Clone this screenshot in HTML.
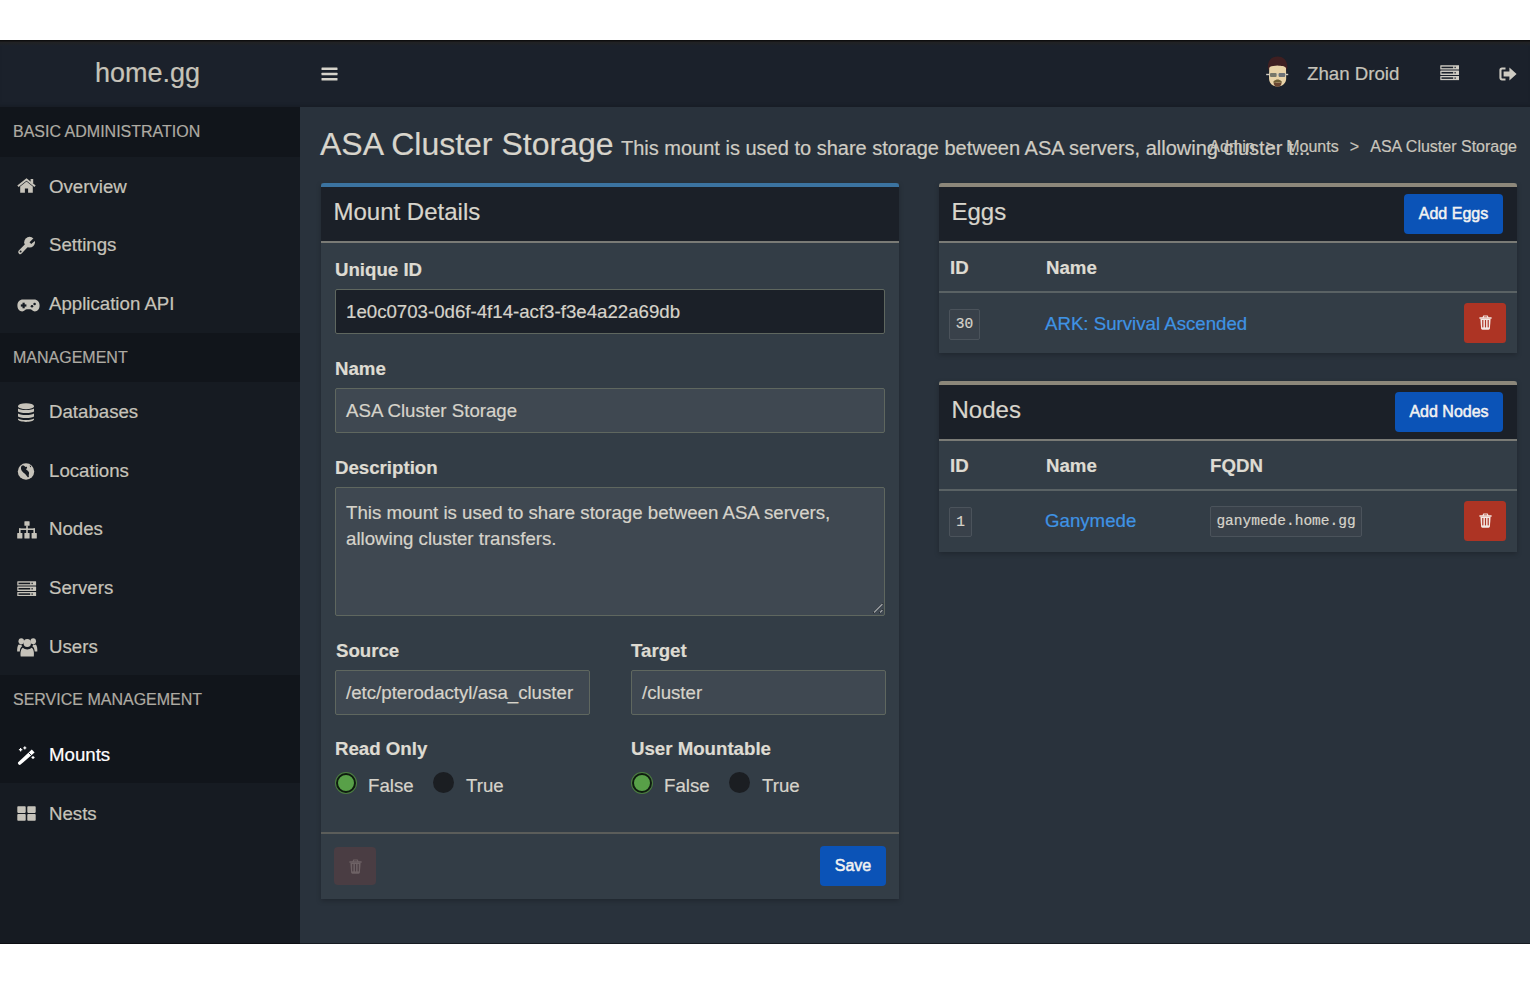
<!DOCTYPE html>
<html><head><meta charset="utf-8">
<style>
*{box-sizing:border-box;margin:0;padding:0}
html,body{width:1530px;height:988px;overflow:hidden;background:#fff;font-family:"Liberation Sans",sans-serif;color:#d6d3ca}
.abs{position:absolute}
#app{position:absolute;left:0;top:40px;width:1530px;height:904px;background:#29323c;overflow:hidden}
#hdr{position:absolute;left:0;top:0;width:1530px;height:67px;background:#1b212b;box-shadow:inset 0 -3px 3px -1px rgba(0,0,0,.12)}
#hdr .topline{position:absolute;left:0;top:0;width:1530px;height:6px;background:linear-gradient(#0e0e0f 0px,#0e0e0f 1px,#222224 2px,#1f2226 3.5px,#1b212b 6px)}
#botline{position:absolute;z-index:5;left:0;top:903px;width:1530px;height:1px;background:rgba(0,0,0,.45)}
#logo{position:absolute;left:95px;top:18px;font-size:27px;color:#c6c3b9;letter-spacing:0}
#side{position:absolute;left:0;top:67px;width:300px;height:837px;background:#161b22}
.sh{position:absolute;left:0;width:300px;height:49.5px;background:#11151b;font-size:16px;color:#aeaba3;padding-left:13px;line-height:49.5px}
.it{position:absolute;left:0;width:300px;height:58.67px;font-size:18.67px;color:#c6c3ba;line-height:58.67px}
.it .tx{position:absolute;left:49px;top:1px}
.it.act{background:#11151b;color:#fff}
#content{position:absolute;left:300px;top:67px;width:1230px;height:837px;background:#29323c}

#ptitle{position:absolute;left:20px;top:18.5px;font-size:32px;color:#d8d5cc;white-space:nowrap}
#ptitle small{font-size:20px;padding-left:7.5px;color:#cfccc3}
#bc{position:absolute;right:13px;top:31px;font-size:16px;color:#c9c6bd;white-space:nowrap}
#bc span.sep{padding:0 6.67px}
.box{position:absolute;background:#333d46;box-shadow:0 2px 5px rgba(0,0,0,.22)}
.box .bt{position:absolute;left:0;top:0;right:0;height:4px;border-radius:3px 3px 0 0}
.box .bh{position:absolute;left:0;top:4px;right:0;height:56px;background:#1b2028;border-bottom:2px solid #7a7b76}
.box .bh .t{position:absolute;left:12.5px;top:10.5px;font-size:24px;color:#d8d5cc}
.lbl{position:absolute;font-weight:bold;font-size:18.67px;color:#dedbd2}
.inp{position:absolute;height:45px;background:#3f4851;border:1.5px solid #5f675f;border-radius:2px;font-size:18.67px;color:#d6d3ca;padding-left:10px;line-height:43px;white-space:nowrap;overflow:hidden}
.btn{position:absolute;background:#0b53b7;border-radius:4px;color:#f2f2f2;font-size:16px;text-align:center;-webkit-text-stroke:0.5px #f2f2f2}
.del{position:absolute;background:#ad3424;border-radius:3.5px}
.th{position:absolute;font-weight:bold;font-size:18.67px;color:#dedbd2}
.sep2{position:absolute;left:0;right:0;height:2px;background:#5a6264}
.badge{position:absolute;border:1px solid #4b535b;background:#39414a;border-radius:2px;font-family:"Liberation Mono",monospace;font-size:14.5px;color:#d6d3ca;text-align:center}
.link{position:absolute;font-size:18.67px;color:#3f93e4;white-space:nowrap}
.radio{position:absolute;width:21px;height:21px;border-radius:50%}
.rg{background:#58a048;border:2.5px solid #0f1c10;box-shadow:0 0 0 1px #4b7d40;width:20px!important;height:20px!important;margin:0.5px}
.rd{background:#1b1e22}
.rt{position:absolute;font-size:18.67px;color:#d6d3ca}
#app div,#app span,#app small{-webkit-text-stroke:0.2px currentColor}
#app .btn{-webkit-text-stroke:0.5px #f2f2f2}
</style></head>
<body>
<div id="app">
  <div id="hdr">
    <div class="topline"></div>
    <div id="logo">home.gg</div><svg style="position:absolute;left:321px;top:26.5px;color:#d6d3ca" width="17" height="14" viewBox="0 0 17 14"><g fill="currentColor"><rect x="0.5" y="0.5" width="16" height="2.6" rx="0.5"/><rect x="0.5" y="5.7" width="16" height="2.6" rx="0.5"/><rect x="0.5" y="10.9" width="16" height="2.6" rx="0.5"/></g></svg><svg style="position:absolute;left:1264px;top:16px" width="27" height="33" viewBox="0 0 27 33">
<path d="M4 13 C3 4 8 0.4 13.6 0.4 C19.2 0.4 24 4 23.2 13 L22 14 L5 14 Z" fill="#3f1f21"/>
<path d="M5.2 12 C6.5 9.5 10 10 13.6 9.4 C17.2 10 20.6 9.5 22 12 L22.2 22 C22.2 27.5 18.5 30.5 13.6 30.5 C8.7 30.5 5 27.5 5 22 Z" fill="#e9d3a8"/>
<path d="M9.4 25.5 C11 24.2 12.5 23.6 13.6 23.6 C14.7 23.6 16.2 24.2 17.8 25.5 L17.4 27 C16 26.2 11.2 26.2 9.8 27 Z" fill="#6e5e36"/>
<path d="M9.6 26.4 C11 27 16.2 27 17.6 26.4 C17.6 29 16 30.8 13.6 30.8 C11.2 30.8 9.6 29 9.6 26.4 Z" fill="#6a4530"/>
<rect x="2.2" y="17.8" width="22" height="1.4" fill="#d2cdc2"/>
<rect x="6" y="17" width="6.6" height="4" rx="1" fill="#77776a"/>
<rect x="14.6" y="17" width="6.6" height="4" rx="1" fill="#6c7176"/>
</svg><div style="position:absolute;left:1307px;top:22.5px;font-size:18.67px;color:#c6c3ba">Zhan Droid</div><svg style="position:absolute;left:1439.5px;top:25px;color:#cfccc3" width="19.5" height="15.5" viewBox="0 0 21 16" preserveAspectRatio="none"><defs><mask id="ms"><rect width="21" height="16" fill="#fff"/><rect x="1.6" y="1.7" width="12.6" height="1.6" fill="#000"/><rect x="1.6" y="7.2" width="12.6" height="1.6" fill="#000"/><rect x="1.6" y="12.7" width="12.6" height="1.6" fill="#000"/><rect x="15.6" y="1.8" width="1.4" height="1.4" fill="#000"/><rect x="15.6" y="7.3" width="1.4" height="1.4" fill="#000"/><rect x="15.6" y="12.8" width="1.4" height="1.4" fill="#000"/></mask></defs><g fill="currentColor" mask="url(#ms)"><rect x="0.3" y="0.3" width="20.4" height="4.4" rx="0.6"/><rect x="0.3" y="5.8" width="20.4" height="4.4" rx="0.6"/><rect x="0.3" y="11.3" width="20.4" height="4.4" rx="0.6"/></g></svg><svg style="position:absolute;left:1498.5px;top:26.5px;color:#cfccc3" width="18" height="14" viewBox="0 0 18 14"><g fill="currentColor"><path d="M6.5 0.5 L3 0.5 C1.4 0.5 0.4 1.6 0.4 3.2 L0.4 10.8 C0.4 12.4 1.4 13.5 3 13.5 L6.5 13.5 L6.5 11.4 L3.2 11.4 C2.8 11.4 2.5 11.1 2.5 10.7 L2.5 3.3 C2.5 2.9 2.8 2.6 3.2 2.6 L6.5 2.6 Z"/><path d="M10.4 0.6 L17.6 7 L10.4 13.4 L10.4 9.6 L4.6 9.6 L4.6 4.4 L10.4 4.4 Z"/></g></svg>
  </div>
  <div id="side">
    <div class="sh" style="top:0.00px">BASIC ADMINISTRATION</div>
    <div class="it" style="top:49.50px"><svg style="position:absolute;left:17px;top:21.9px" width="19" height="15" viewBox="0 0 19 15"><g fill="currentColor"><path d="M0.3 7.6 L9.5 0.2 L18.7 7.6 L17.4 9.1 L9.5 2.7 L1.6 9.1 Z"/><rect x="13.6" y="1" width="2.6" height="4.4"/><path d="M3.2 8.6 L9.5 3.6 L15.8 8.6 L15.8 14.8 L11.1 14.8 L11.1 10.6 L7.9 10.6 L7.9 14.8 L3.2 14.8 Z"/></g></svg><span class="tx">Overview</span></div>
    <div class="it" style="top:108.17px"><svg style="position:absolute;left:17px;top:21.0px" width="19" height="19" viewBox="0 0 19 19"><defs><mask id="mw"><rect width="19" height="19" fill="#fff"/><path d="M12.5 6.3 L19 -0.2 L19 4 L14.2 8 Z" fill="#000"/><circle cx="3.6" cy="15.4" r="1" fill="#000"/></mask></defs><g fill="currentColor" mask="url(#mw)"><circle cx="12.6" cy="6.2" r="5.4"/><path d="M9.2 7 L12 9.8 L4.6 17.6 Q3.2 19 1.8 17.4 Q0.4 16 1.8 14.6 Z"/></g></svg><span class="tx">Settings</span></div>
    <div class="it" style="top:166.83px"><svg style="position:absolute;left:17px;top:25.5px" width="23" height="13" viewBox="0 0 23 13"><defs><mask id="mg"><rect width="23" height="13" fill="#fff"/><rect x="3.8" y="5.4" width="5.6" height="2.2" fill="#000"/><rect x="5.5" y="3.7" width="2.2" height="5.6" fill="#000"/><circle cx="15" cy="7.2" r="1.3" fill="#000"/><circle cx="17.6" cy="5" r="1.3" fill="#000"/></mask></defs><path mask="url(#mg)" fill="currentColor" d="M6 0.6 L17 0.6 C20.5 0.6 22.6 3 22.6 6.5 C22.6 10.2 20.5 12.4 17.8 12.4 C15.6 12.4 14.6 10.2 13.2 10.2 L9.8 10.2 C8.4 10.2 7.4 12.4 5.2 12.4 C2.5 12.4 0.4 10.2 0.4 6.5 C0.4 3 2.5 0.6 6 0.6 Z"/></svg><span class="tx">Application API</span></div>
    <div class="sh" style="top:225.50px">MANAGEMENT</div>
    <div class="it" style="top:275.00px"><svg style="position:absolute;left:17px;top:20.6px" width="18" height="20" viewBox="0 0 18 20"><g fill="currentColor"><ellipse cx="9" cy="3.2" rx="8" ry="3"/><path d="M1 5.2 C2 7.6 16 7.6 17 5.2 L17 8.2 C16 10.6 2 10.6 1 8.2 Z"/><path d="M1 10.2 C2 12.6 16 12.6 17 10.2 L17 13.2 C16 15.6 2 15.6 1 13.2 Z"/><path d="M1 15.2 C2 17.6 16 17.6 17 15.2 L17 16.6 C16 19.8 2 19.8 1 16.6 Z"/></g></svg><span class="tx">Databases</span></div>
    <div class="it" style="top:333.67px"><svg style="position:absolute;left:17px;top:22.0px" width="18" height="17" viewBox="0 0 18 17"><defs><mask id="mgl"><rect width="18" height="17" fill="#fff"/><path fill="#000" d="M4.5 3 C6 2 7.5 2.6 8.5 4 C9.5 3.2 10.5 4 10 5 L9 6.5 C10.2 7.2 11.5 8 12 9.6 C12.4 11 11.2 12.2 12 13.6 L11 14.6 C10 13.2 9.2 12 8.2 11 C7 10.2 5.5 9 4.6 7.6 C4 6.5 3.6 4.4 4.5 3 Z"/><path fill="#000" d="M12.6 2.2 L14.2 3.2 L13.4 4.4 Z"/></mask></defs><circle mask="url(#mgl)" cx="9" cy="8.5" r="8.2" fill="currentColor"/></svg><span class="tx">Locations</span></div>
    <div class="it" style="top:392.34px"><svg style="position:absolute;left:17px;top:21.9px" width="20" height="18" viewBox="0 0 20 18"><g fill="currentColor"><rect x="7.4" y="0.2" width="5.2" height="4.6" rx="0.6"/><rect x="9.2" y="4.5" width="1.6" height="3.6"/><rect x="2" y="7.4" width="16" height="1.6"/><rect x="2" y="7.4" width="1.6" height="5"/><rect x="9.2" y="7.4" width="1.6" height="5"/><rect x="16.4" y="7.4" width="1.6" height="5"/><rect x="0.2" y="12" width="5.2" height="5.6" rx="0.6"/><rect x="7.4" y="12" width="5.2" height="5.6" rx="0.6"/><rect x="14.6" y="12" width="5.2" height="5.6" rx="0.6"/></g></svg><span class="tx">Nodes</span></div>
    <div class="it" style="top:451.00px"><svg style="position:absolute;left:17px;top:22.5px" width="19.5" height="15.5" viewBox="0 0 21 16" preserveAspectRatio="none"><defs><mask id="ms"><rect width="21" height="16" fill="#fff"/><rect x="1.6" y="1.7" width="12.6" height="1.6" fill="#000"/><rect x="1.6" y="7.2" width="12.6" height="1.6" fill="#000"/><rect x="1.6" y="12.7" width="12.6" height="1.6" fill="#000"/><rect x="15.6" y="1.8" width="1.4" height="1.4" fill="#000"/><rect x="15.6" y="7.3" width="1.4" height="1.4" fill="#000"/><rect x="15.6" y="12.8" width="1.4" height="1.4" fill="#000"/></mask></defs><g fill="currentColor" mask="url(#ms)"><rect x="0.3" y="0.3" width="20.4" height="4.4" rx="0.6"/><rect x="0.3" y="5.8" width="20.4" height="4.4" rx="0.6"/><rect x="0.3" y="11.3" width="20.4" height="4.4" rx="0.6"/></g></svg><span class="tx">Servers</span></div>
    <div class="it" style="top:509.67px"><svg style="position:absolute;left:17px;top:20.3px" width="20.5" height="20" viewBox="0 0 22 20" preserveAspectRatio="none"><g fill="currentColor"><circle cx="11" cy="6" r="4"/><circle cx="4.6" cy="4.2" r="3"/><circle cx="17.4" cy="4.2" r="3"/><path d="M4 19.6 L18 19.6 C18.6 16 18 11.8 15.6 10.8 C14.4 11.8 12.8 12.4 11 12.4 C9.2 12.4 7.6 11.8 6.4 10.8 C4 11.8 3.4 16 4 19.6 Z"/><path d="M0.2 14.4 L3 14.4 C3.1 11.8 4 10.2 5.6 9.2 C5 8.8 4.8 8.2 4.7 7.6 C3.8 7.8 2.8 7.8 1.8 7.4 C0.4 8.6 0 11.6 0.2 14.4 Z"/><path d="M21.8 14.4 L19 14.4 C18.9 11.8 18 10.2 16.4 9.2 C17 8.8 17.2 8.2 17.3 7.6 C18.2 7.8 19.2 7.8 20.2 7.4 C21.6 8.6 22 11.6 21.8 14.4 Z"/></g></svg><span class="tx">Users</span></div>
    <div class="sh" style="top:568.34px">SERVICE MANAGEMENT</div>
    <div class="it act" style="top:617.84px"><svg style="position:absolute;left:17px;top:21.0px" width="19" height="19" viewBox="0 0 19 19"><g fill="currentColor"><path d="M14.8 3.6 L17.6 6.4 L3.6 18.6 Q2.6 19.4 1.4 18.2 Q0.4 17 1.2 16.2 Z"/><rect x="3" y="2" width="1.2" height="3.4"/><rect x="1.9" y="3.1" width="3.4" height="1.2"/><rect x="7.2" y="0.4" width="1.2" height="3"/><rect x="6.3" y="1.3" width="3" height="1.2"/><rect x="15.4" y="10" width="1.2" height="3"/><rect x="14.5" y="10.9" width="3" height="1.2"/></g><path d="M11.6 6.6 L14.4 9.4" stroke="#161b22" stroke-width="0.9"/></svg><span class="tx">Mounts</span></div>
    <div class="it" style="top:676.50px"><svg style="position:absolute;left:17px;top:22.9px" width="19" height="15" viewBox="0 0 19 15"><g fill="currentColor"><rect x="0.3" y="0.3" width="8.4" height="6.6" rx="0.8"/><rect x="10.3" y="0.3" width="8.4" height="6.6" rx="0.8"/><rect x="0.3" y="8.1" width="8.4" height="6.6" rx="0.8"/><rect x="10.3" y="8.1" width="8.4" height="6.6" rx="0.8"/></g></svg><span class="tx">Nests</span></div>
  </div>
  <div id="botline"></div><div id="content">
    <div id="ptitle">ASA Cluster Storage<small>This mount is used to share storage between ASA servers, allowing cluster t...</small></div>
    <div id="bc">Admin <span class="sep">&gt;&nbsp;</span>Mounts <span class="sep">&gt;&nbsp;</span>ASA Cluster Storage</div>

    <div class="box" style="left:21px;top:76px;width:578px;height:716px">
      <div class="bt" style="background:#3b73a0"></div>
      <div class="bh"><div class="t">Mount Details</div></div>
      <div class="lbl" style="left:14px;top:76px">Unique ID</div>
      <div class="inp" style="left:14px;top:106px;width:550px;background:#1b2028">1e0c0703-0d6f-4f14-acf3-f3e4a22a69db</div>
      <div class="lbl" style="left:14px;top:175px">Name</div>
      <div class="inp" style="left:14px;top:205px;width:550px">ASA Cluster Storage</div>
      <div class="lbl" style="left:14px;top:274px">Description</div>
      <div class="inp" style="left:14px;top:304px;width:550px;height:129px;line-height:26.67px;padding-top:11.5px;white-space:normal">This mount is used to share storage between ASA servers, allowing cluster transfers.<svg style="position:absolute;left:536px;top:114px" width="12" height="12" viewBox="0 0 12 12"><path d="M1.5 11 L11 1.5 M7.5 11 L11 7.5" stroke="#15181c" stroke-width="1.6"/><path d="M2 10.5 L10.5 2 M8 10.5 L10.5 8" stroke="#a9adb0" stroke-width="1.1"/></svg></div>
      <div class="lbl" style="left:15px;top:457px">Source</div>
      <div class="inp" style="left:14px;top:487px;width:255px">/etc/pterodactyl/asa_cluster</div>
      <div class="lbl" style="left:310px;top:457px">Target</div>
      <div class="inp" style="left:310px;top:487px;width:255px">/cluster</div>
      <div class="lbl" style="left:14px;top:555px">Read Only</div>
      <div class="radio rg" style="left:14px;top:589px"></div><div class="rt" style="left:47px;top:592px">False</div>
      <div class="radio rd" style="left:112px;top:589px"></div><div class="rt" style="left:145px;top:592px">True</div>
      <div class="lbl" style="left:310px;top:555px">User Mountable</div>
      <div class="radio rg" style="left:310px;top:589px"></div><div class="rt" style="left:343px;top:592px">False</div>
      <div class="radio rd" style="left:408px;top:589px"></div><div class="rt" style="left:441px;top:592px">True</div>
      <div class="sep2" style="top:649px;background:#5b5d5a"></div>
      <div class="abs" style="left:13px;top:664px;width:42px;height:38px;background:#4a3d43;border-radius:4px"><svg style="position:absolute;left:14.5px;top:12px;color:#6e6265" width="13" height="15" viewBox="0 0 13 15"><defs><mask id="mt"><rect width="13" height="15" fill="#fff"/><rect x="3.2" y="5" width="1.2" height="7.4" fill="#000"/><rect x="5.9" y="5" width="1.2" height="7.4" fill="#000"/><rect x="8.6" y="5" width="1.2" height="7.4" fill="#000"/></mask></defs><g fill="currentColor"><path d="M4.3 0.4 L8.7 0.4 L9.5 2.2 L12.6 2.2 L12.6 3.8 L0.4 3.8 L0.4 2.2 L3.5 2.2 Z M5 1.6 L4.8 2.2 L8.2 2.2 L8 1.6 Z" fill-rule="evenodd"/><path mask="url(#mt)" d="M1.4 3.8 L11.6 3.8 L10.9 13.6 C10.8 14.4 10.3 14.7 9.6 14.7 L3.4 14.7 C2.7 14.7 2.2 14.4 2.1 13.6 Z"/></g></svg></div>
      <div class="btn" style="left:499px;top:663px;width:66px;height:40px;line-height:40px">Save</div>
    </div>

    <div class="box" style="left:639px;top:76px;width:578px;height:170px">
      <div class="bt" style="background:#8c877a"></div>
      <div class="bh"><div class="t">Eggs</div></div>
      <div class="btn" style="left:465px;top:11px;width:99px;height:40px;line-height:40px">Add Eggs</div>
      <div class="th" style="left:11px;top:74px">ID</div>
      <div class="th" style="left:107px;top:74px">Name</div>
      <div class="sep2" style="top:108px"></div>
      <div class="badge" style="left:10px;top:126px;width:31px;height:30.5px;line-height:29px">30</div>
      <div class="link" style="left:106px;top:130px">ARK: Survival Ascended</div>
      <div class="del" style="left:525px;top:120px;width:42px;height:40px"><svg style="position:absolute;left:14.5px;top:11.5px;color:#f4e8e4" width="13" height="15" viewBox="0 0 13 15"><defs><mask id="mt"><rect width="13" height="15" fill="#fff"/><rect x="3.2" y="5" width="1.2" height="7.4" fill="#000"/><rect x="5.9" y="5" width="1.2" height="7.4" fill="#000"/><rect x="8.6" y="5" width="1.2" height="7.4" fill="#000"/></mask></defs><g fill="currentColor"><path d="M4.3 0.4 L8.7 0.4 L9.5 2.2 L12.6 2.2 L12.6 3.8 L0.4 3.8 L0.4 2.2 L3.5 2.2 Z M5 1.6 L4.8 2.2 L8.2 2.2 L8 1.6 Z" fill-rule="evenodd"/><path mask="url(#mt)" d="M1.4 3.8 L11.6 3.8 L10.9 13.6 C10.8 14.4 10.3 14.7 9.6 14.7 L3.4 14.7 C2.7 14.7 2.2 14.4 2.1 13.6 Z"/></g></svg></div>
    </div>

    <div class="box" style="left:639px;top:274px;width:578px;height:171px">
      <div class="bt" style="background:#8c877a"></div>
      <div class="bh"><div class="t">Nodes</div></div>
      <div class="btn" style="left:456px;top:11px;width:108px;height:40px;line-height:40px">Add Nodes</div>
      <div class="th" style="left:11px;top:74px">ID</div>
      <div class="th" style="left:107px;top:74px">Name</div>
      <div class="th" style="left:271px;top:74px">FQDN</div>
      <div class="sep2" style="top:108px"></div>
      <div class="badge" style="left:10px;top:126px;width:23px;height:30px;line-height:28px">1</div>
      <div class="link" style="left:106px;top:129px">Ganymede</div>
      <div class="badge" style="left:271px;top:125px;width:152px;height:31px;line-height:29px">ganymede.home.gg</div>
      <div class="del" style="left:525px;top:120px;width:42px;height:40px"><svg style="position:absolute;left:14.5px;top:11.5px;color:#f4e8e4" width="13" height="15" viewBox="0 0 13 15"><defs><mask id="mt"><rect width="13" height="15" fill="#fff"/><rect x="3.2" y="5" width="1.2" height="7.4" fill="#000"/><rect x="5.9" y="5" width="1.2" height="7.4" fill="#000"/><rect x="8.6" y="5" width="1.2" height="7.4" fill="#000"/></mask></defs><g fill="currentColor"><path d="M4.3 0.4 L8.7 0.4 L9.5 2.2 L12.6 2.2 L12.6 3.8 L0.4 3.8 L0.4 2.2 L3.5 2.2 Z M5 1.6 L4.8 2.2 L8.2 2.2 L8 1.6 Z" fill-rule="evenodd"/><path mask="url(#mt)" d="M1.4 3.8 L11.6 3.8 L10.9 13.6 C10.8 14.4 10.3 14.7 9.6 14.7 L3.4 14.7 C2.7 14.7 2.2 14.4 2.1 13.6 Z"/></g></svg></div>
    </div>
  </div>
</div>
</body></html>
